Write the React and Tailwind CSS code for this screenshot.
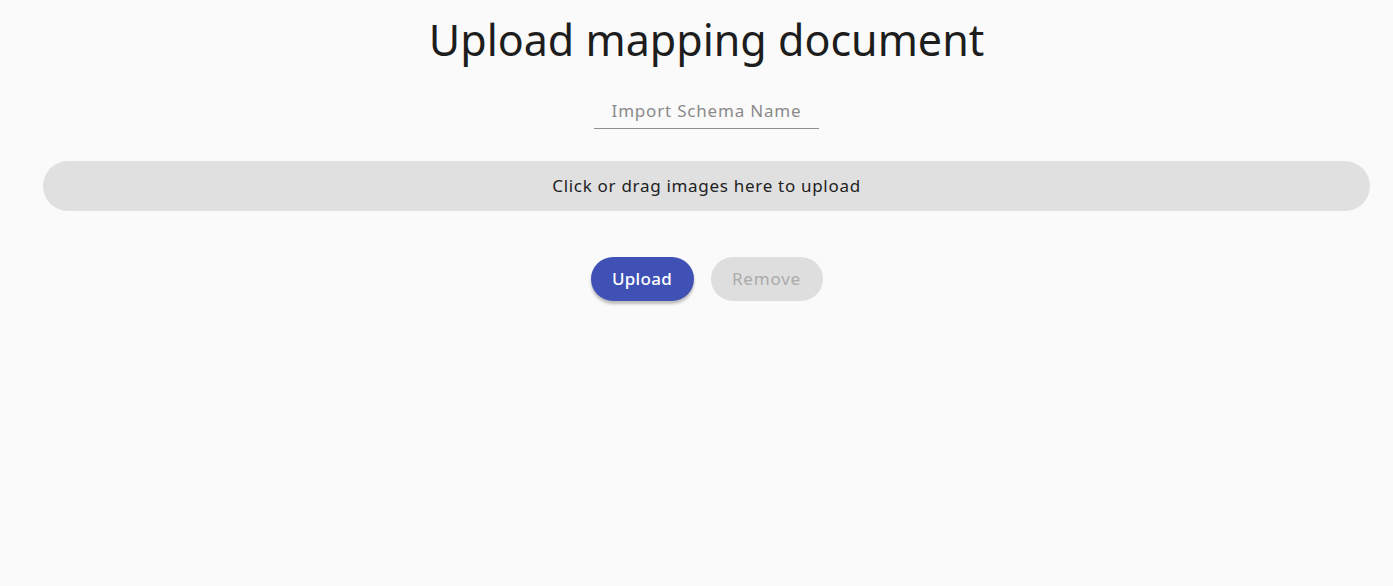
export default function App() {
  const font = { fontFamily: '"Noto Sans", "Open Sans", sans-serif' };
  return (
    <div className="min-h-[586px] w-full bg-[#fafafa] pl-[20px]" style={font}>
      <div className="flex flex-col items-center">
        <h1 className="mt-[12px] h-[56px] text-[43px] leading-[56px] font-normal text-[#1d1d1d]">
          Upload mapping document
        </h1>
        <div className="mt-[26px] w-[225px] border-b border-[#8f8f8f] h-[35px] flex items-center justify-center">
          <input
            placeholder="Import Schema Name"
            className="w-full bg-transparent text-center text-[17px] tracking-[0.8px] outline-none placeholder:text-[#8a8a8a] text-[#333]"
          />
        </div>
      </div>
      <div className="mx-[23px] mt-[32px] h-[50px] rounded-full bg-[#e0e0e0] flex items-center justify-center text-[17px] tracking-[0.7px] text-[#222]">
        Click or drag images here to upload
      </div>
      <div className="mt-[46px] flex justify-center gap-[17px]">
        <button className="h-[44px] w-[103px] rounded-full bg-[#3f51b5] text-white text-[17px] font-medium tracking-[0.3px] shadow-[0_3px_3px_rgba(0,0,0,0.25)]">
          Upload
        </button>
        <button className="h-[44px] w-[112px] rounded-full bg-[#dedede] text-[#ababab] text-[17px] tracking-[0.8px]">
          Remove
        </button>
      </div>
    </div>
  );
}
